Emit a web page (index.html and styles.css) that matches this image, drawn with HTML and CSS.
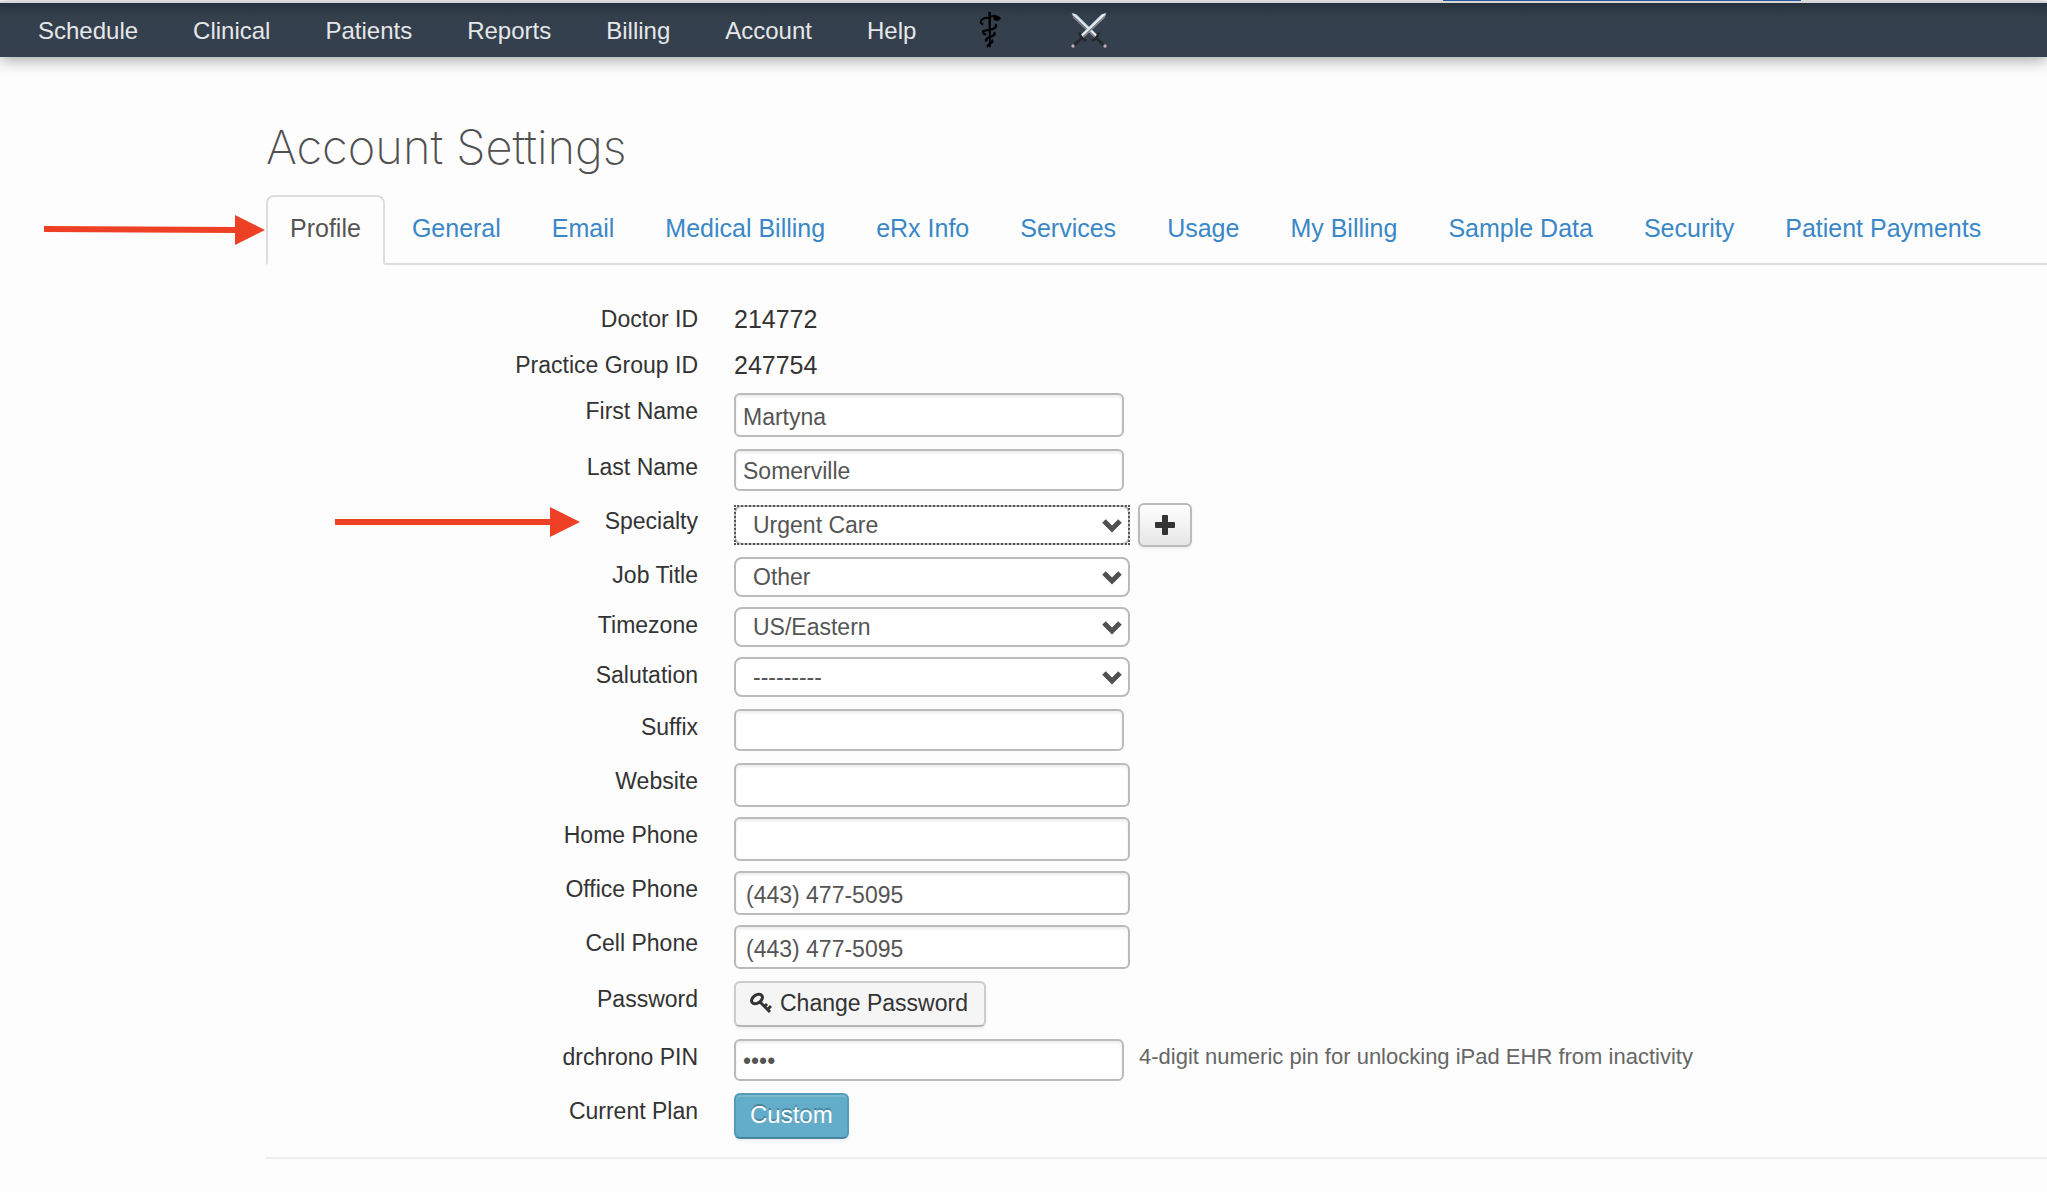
FILE: index.html
```html
<!DOCTYPE html>
<html lang="en">
<head>
<meta charset="utf-8">
<title>Account Settings</title>
<meta name="viewport" content="width=device-width, initial-scale=1">
<link rel="stylesheet" href="styles.css">
</head>
<body>
<div class="window-edge"><span class="address-focus"></span></div>
<nav class="navbar" aria-label="Main">
  <a href="#">Schedule</a>
  <a href="#">Clinical</a>
  <a href="#">Patients</a>
  <a href="#">Reports</a>
  <a href="#">Billing</a>
  <a href="#">Account</a>
  <a href="#">Help</a>
  <a href="#" class="nav-icon" aria-label="Medical">
    <svg width="36" height="36" viewBox="0 0 108 108">
      <path d="M52 0h8v8l-1 98h-5l-2-98z" fill="#000"/>
      <path d="M87 20C80 9 64 10 57 16M56 18C40 16 30 22 29 30c0 4 4 6 8 7" fill="none" stroke="#000" stroke-width="6"/>
      <path d="M66 13l16-1 8 8-10 7-12-3z" fill="#000"/>
      <path d="M72 37c8 6 0 14-14 16-14 2-24 3-22 9 2 5 10 6 10 6M68 61c8 6 0 10-10 14-10 3-16 7-11 13M62 84c6 5 0 8-6 12-5 3-8 5-5 9" fill="none" stroke="#000" stroke-width="7"/>
    </svg>
  </a>
  <a href="#" class="nav-icon" aria-label="Tools">
    <svg width="36" height="36" viewBox="0 0 108 108">
      <path d="M2 3L16 7 80 70 72 78 8 18z" fill="#b9d3df"/>
      <path d="M2 3L8 18 72 78 76 74z" fill="#83767c"/>
      <path d="M6 6L76 72" stroke="#dff2fa" stroke-width="5"/>
      <path d="M62 86q14-2 22-24M76 78l24 23" fill="none" stroke="#24272b" stroke-width="8"/>
      <path d="M106 3L92 7 28 70 36 78 100 18z" fill="#c6dfea"/>
      <path d="M106 3L100 18 36 78 32 74z" fill="#8b7b82"/>
      <path d="M102 6L32 72" stroke="#e4f5fc" stroke-width="5"/>
      <path d="M46 86Q32 84 24 62M32 78L8 101" fill="none" stroke="#24272b" stroke-width="8"/>
      <circle cx="6" cy="102" r="5" fill="#c9adb0"/><circle cx="102" cy="102" r="5" fill="#c9adb0"/>
    </svg>
  </a>
</nav>

<main class="page">
  <h1>Account Settings</h1>
  <div class="tabs">
    <a href="#" class="tab active" aria-current="page">Profile</a>
    <a href="#" class="tab">General</a>
    <a href="#" class="tab">Email</a>
    <a href="#" class="tab">Medical Billing</a>
    <a href="#" class="tab">eRx Info</a>
    <a href="#" class="tab">Services</a>
    <a href="#" class="tab">Usage</a>
    <a href="#" class="tab">My Billing</a>
    <a href="#" class="tab">Sample Data</a>
    <a href="#" class="tab">Security</a>
    <a href="#" class="tab">Patient Payments</a>
    <svg class="pointer pointer-tab" width="222" height="30" viewBox="0 0 222 30" aria-hidden="true"><path d="M0 11L191 12V0L221 15 191 30V18L0 17z" fill="#ed4024"/></svg>
  </div>

  <form class="settings">
    <div class="row plain"><span class="label">Doctor ID</span><span class="value">214772</span></div>
    <div class="row plain"><span class="label">Practice Group ID</span><span class="value">247754</span></div>
    <div class="row loose"><label class="label" for="first">First Name</label><input class="field tall name" id="first" type="text" value="Martyna"></div>
    <div class="row loose"><label class="label" for="last">Last Name</label><input class="field name" id="last" type="text" value="Somerville"></div>
    <div class="row">
      <label class="label" for="specialty">Specialty</label>
      <div class="controls">
        <span class="select focused"><select id="specialty"><option>Urgent Care</option></select><svg width="20" height="14" viewBox="0 0 20 14" aria-hidden="true"><path d="M2 2L10 10L18 2" /></svg></span>
        <button type="button" class="button add" aria-label="Add specialty"><svg width="20" height="20" viewBox="0 0 20 20"><path d="M8 0h4q1 0 1 1v6h6q1 0 1 1v4q0 1-1 1h-6v6q0 1-1 1H8q-1 0-1-1v-6H1q-1 0-1-1V8q0-1 1-1h6V1q0-1 1-1z" fill="#333"/></svg></button>
      </div>
    </div>
    <div class="row"><label class="label" for="job">Job Title</label><span class="select"><select id="job"><option>Other</option></select><svg width="20" height="14" viewBox="0 0 20 14" aria-hidden="true"><path d="M2 2L10 10L18 2" /></svg></span></div>
    <div class="row"><label class="label" for="zone">Timezone</label><span class="select"><select id="zone"><option>US/Eastern</option></select><svg width="20" height="14" viewBox="0 0 20 14" aria-hidden="true"><path d="M2 2L10 10L18 2" /></svg></span></div>
    <div class="row loose"><label class="label" for="salutation">Salutation</label><span class="select"><select id="salutation"><option>---------</option></select><svg width="20" height="14" viewBox="0 0 20 14" aria-hidden="true"><path d="M2 2L10 10L18 2" /></svg></span></div>
    <div class="row loose"><label class="label" for="suffix">Suffix</label><input class="field name" id="suffix" type="text"></div>
    <div class="row"><label class="label" for="website">Website</label><input class="field tall" id="website" type="text"></div>
    <div class="row"><label class="label" for="home">Home Phone</label><input class="field tall" id="home" type="tel"></div>
    <div class="row"><label class="label" for="office">Office Phone</label><input class="field tall" id="office" type="tel" value="(443) 477-5095"></div>
    <div class="row loose"><label class="label" for="cell">Cell Phone</label><input class="field tall" id="cell" type="tel" value="(443) 477-5095"></div>
    <div class="row loose">
      <label class="label" for="password">Password</label>
      <button type="button" class="button" id="password"><svg width="22" height="22" viewBox="0 0 22 22" aria-hidden="true"><ellipse cx="7" cy="7" rx="6" ry="4" transform="rotate(-35 7 7)" fill="none" stroke="#333" stroke-width="3"/><path d="M10 10L20 20M14 15l3-3M17 18l4-4" fill="none" stroke="#333" stroke-width="3"/></svg>Change Password</button>
    </div>
    <div class="row loose">
      <label class="label" for="pin">drchrono PIN</label>
      <div class="controls wide"><input class="field name" id="pin" type="password" value="1234"><span class="hint">4-digit numeric pin for unlocking iPad EHR from inactivity</span></div>
    </div>
    <div class="row"><label class="label" for="plan">Current Plan</label><button type="button" class="button info" id="plan">Custom</button></div>
    <svg class="pointer pointer-specialty" width="246" height="30" viewBox="0 0 246 30" aria-hidden="true"><path d="M0 12H215V0L245 15 215 30V18H0z" fill="#ed4024"/></svg>
  </form>
</main>
</body>
</html>
```
FILE: styles.css
```css
* { box-sizing: border-box; }

body {
  margin: 0;
  background: #fdfdfd;
  color: #333;
  font-family: "Liberation Sans", Arial, sans-serif;
  font-size: 23px;
  line-height: 36px;
}

.window-edge {
  position: relative;
  height: 3px;
  border-bottom: 2px solid #d6d6d6;
}

.address-focus {
  position: absolute;
  top: 0;
  left: 70.5%;
  width: 17.5%;
  height: 1px;
  background: #2a569c;
}

.navbar {
  display: flex;
  align-items: center;
  gap: 55px;
  height: 54px;
  padding-left: 38px;
  background: linear-gradient(#27323e, #33404c 14px, #36404f);
  box-shadow: 0 2px 16px rgba(0, 0, 0, 0.4);
}

.navbar a {
  padding-top: 2px;
  color: #e6e7e9;
  font-size: 24px;
  text-decoration: none;
}

.navbar .nav-icon {
  display: flex;
  padding: 0 9px 0 0;
}

.page { padding-left: 266px; }

h1 {
  margin: 0;
  padding: 60px 0 18px;
  color: #505050;
  font-family: Inter, "Liberation Sans", sans-serif;
  font-size: 47px;
  font-weight: 200;
  line-height: 60px;
}

.tabs {
  position: relative;
  display: flex;
  gap: 3px;
  height: 70px;
  border-bottom: 2px solid #ddd;
}

.tab {
  height: 70px;
  padding: 13px 22px;
  border: 2px solid transparent;
  border-radius: 8px 8px 0 0;
  color: #3a87c8;
  font-size: 25px;
  text-decoration: none;
  white-space: nowrap;
}

.tab.active {
  border-color: #ddd;
  border-bottom-color: #fdfdfd;
  background: #fdfdfd;
  color: #555;
}

.pointer { position: absolute; }

.pointer-tab {
  right: 100%;
  top: 20px;
}

.settings {
  position: relative;
  margin: 0;
  padding: 36px 0 8px;
  border-bottom: 2px solid #ededed;
}

.row {
  display: grid;
  grid-template-columns: 432px 1fr;
  column-gap: 36px;
  justify-items: start;
  align-items: start;
  margin-bottom: 10px;
}

.loose { margin-bottom: 12px; }

.label {
  justify-self: end;
  white-space: nowrap;
}

.value { font-size: 25px; }

.controls {
  display: flex;
  align-items: center;
  gap: 8px;
}

.wide {
  align-items: flex-start;
  gap: 15px;
}

.field,
select {
  display: block;
  width: 396px;
  height: 42px;
  padding: 3px 10px 1px;
  border: 2px solid #bbb;
  border-radius: 6px;
  background: #fff;
  box-shadow: inset 0 2px 3px rgba(0, 0, 0, 0.08);
  color: #555;
  font: inherit;
}

.name {
  width: 390px;
  padding-left: 7px;
}

.tall {
  height: 44px;
  padding-top: 5px;
}

.select {
  position: relative;
  display: block;
}

select {
  height: 40px;
  padding: 0 40px 0 17px;
  border-radius: 8px;
  box-shadow: none;
  appearance: none;
}

.select svg {
  position: absolute;
  top: 14px;
  right: 8px;
  fill: none;
  stroke: #505050;
  stroke-width: 5;
  pointer-events: none;
}

.focused {
  outline: 2px dotted #555;
  outline-offset: -2px;
}

.button {
  display: flex;
  align-items: center;
  gap: 8px;
  height: 46px;
  padding: 0 16px 2px 14px;
  border: 2px solid #ccc;
  border-bottom-color: #b5b5b5;
  border-radius: 6px;
  background: #f5f5f5;
  box-shadow: 0 2px 3px rgba(0, 0, 0, 0.06);
  color: #333;
  font: inherit;
}

.add {
  width: 54px;
  height: 44px;
  padding: 0 15px;
  border-color: #bbb;
  background: linear-gradient(#fff, #e6e6e6);
}

.info {
  padding: 0 14px 2px;
  border-color: #529cb8;
  border-bottom-color: #46859d;
  background: #64adca;
  box-shadow: inset 0 2px 0 #7bb9d1, 0 2px 3px rgba(0, 0, 0, 0.06);
  color: #fff;
  font-size: 24px;
  text-shadow: 0 -2px 0 rgba(0, 0, 0, 0.25);
}

.hint {
  color: #666;
  font-size: 22px;
}

.pointer-specialty {
  top: 242px;
  left: 69px;
}
```
